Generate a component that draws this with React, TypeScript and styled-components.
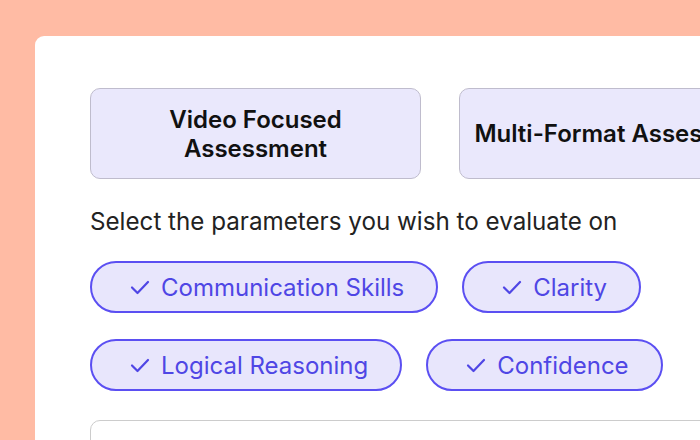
import React from "react";
import styled, { createGlobalStyle } from "styled-components";

const Global = createGlobalStyle`
  html, body { margin: 0; padding: 0; }
  body {
    background: #ffbba4;
    width: 700px;
    height: 440px;
    overflow: hidden;
    font-family: Inter, "Noto Sans", sans-serif;
  }
`;

const Card = styled.div`
  margin: 36px 0 0 35px;
  width: 665px;
  height: 404px;
  overflow: hidden;
  background: #ffffff;
  border-radius: 9px 0 0 0;
  padding: 52px 0 0 55px;
  box-sizing: border-box;
  display: flex;
  flex-direction: column;
`;

const ModeRow = styled.div`
  display: flex;
  gap: 38px;
`;

const ModeButton = styled.div`
  flex: 0 0 auto;
  width: 331px;
  height: 91px;
  box-sizing: border-box;
  background: #eae8fc;
  border: 1.5px solid #bfbccd;
  border-radius: 10px;
  display: flex;
  align-items: center;
  justify-content: center;
  text-align: center;
  font-size: 24px;
  font-weight: 600;
  line-height: 29px;
  color: #111111;
  white-space: pre-line;
`;

const Prompt = styled.div`
  margin-top: 29px;
  font-size: 24.2px;
  line-height: 28px;
  color: #222222;
`;

const ChipGrid = styled.div`
  margin-top: 25px;
  display: flex;
  flex-direction: column;
  gap: 26px;
`;

const ChipRow = styled.div`
  display: flex;
  gap: 24px;
`;

const Chip = styled.div`
  height: 52px;
  box-sizing: border-box;
  display: flex;
  align-items: center;
  gap: 10px;
  padding: 0 32px 0 37px;
  background: #e8e6fc;
  border: 2px solid #5b4ff2;
  border-radius: 26px;
  color: #4f46e5;
  font-size: 24px;
`;

const Check = styled.svg`
  width: 22px;
  height: 22px;
  flex: 0 0 auto;
`;

const Bottom = styled.div`
  margin-top: 29px;
  width: 700px;
  height: 60px;
  flex: 0 0 auto;
  border: 1.5px solid #cccccc;
  border-radius: 10px;
  box-sizing: border-box;
`;

const CheckIcon = () => (
  <Check viewBox="0 0 22 22" fill="none">
    <path d="M3 11.5 L8.5 17 L19 6" stroke="#4f46e5" strokeWidth="2.2" strokeLinecap="round" strokeLinejoin="round" />
  </Check>
);

const rows = [
  ["Communication Skills", "Clarity"],
  ["Logical Reasoning", "Confidence"],
];

export default function App() {
  return (
    <>
      <Global />
      <Card>
        <ModeRow>
          <ModeButton>{"Video Focused\nAssessment"}</ModeButton>
          <ModeButton>Multi-Format Assessment</ModeButton>
        </ModeRow>
        <Prompt>Select the parameters you wish to evaluate on</Prompt>
        <ChipGrid>
          {rows.map((r, i) => (
            <ChipRow key={i}>
              {r.map((label) => (
                <Chip key={label}>
                  <CheckIcon />
                  {label}
                </Chip>
              ))}
            </ChipRow>
          ))}
        </ChipGrid>
        <Bottom />
      </Card>
    </>
  );
}
